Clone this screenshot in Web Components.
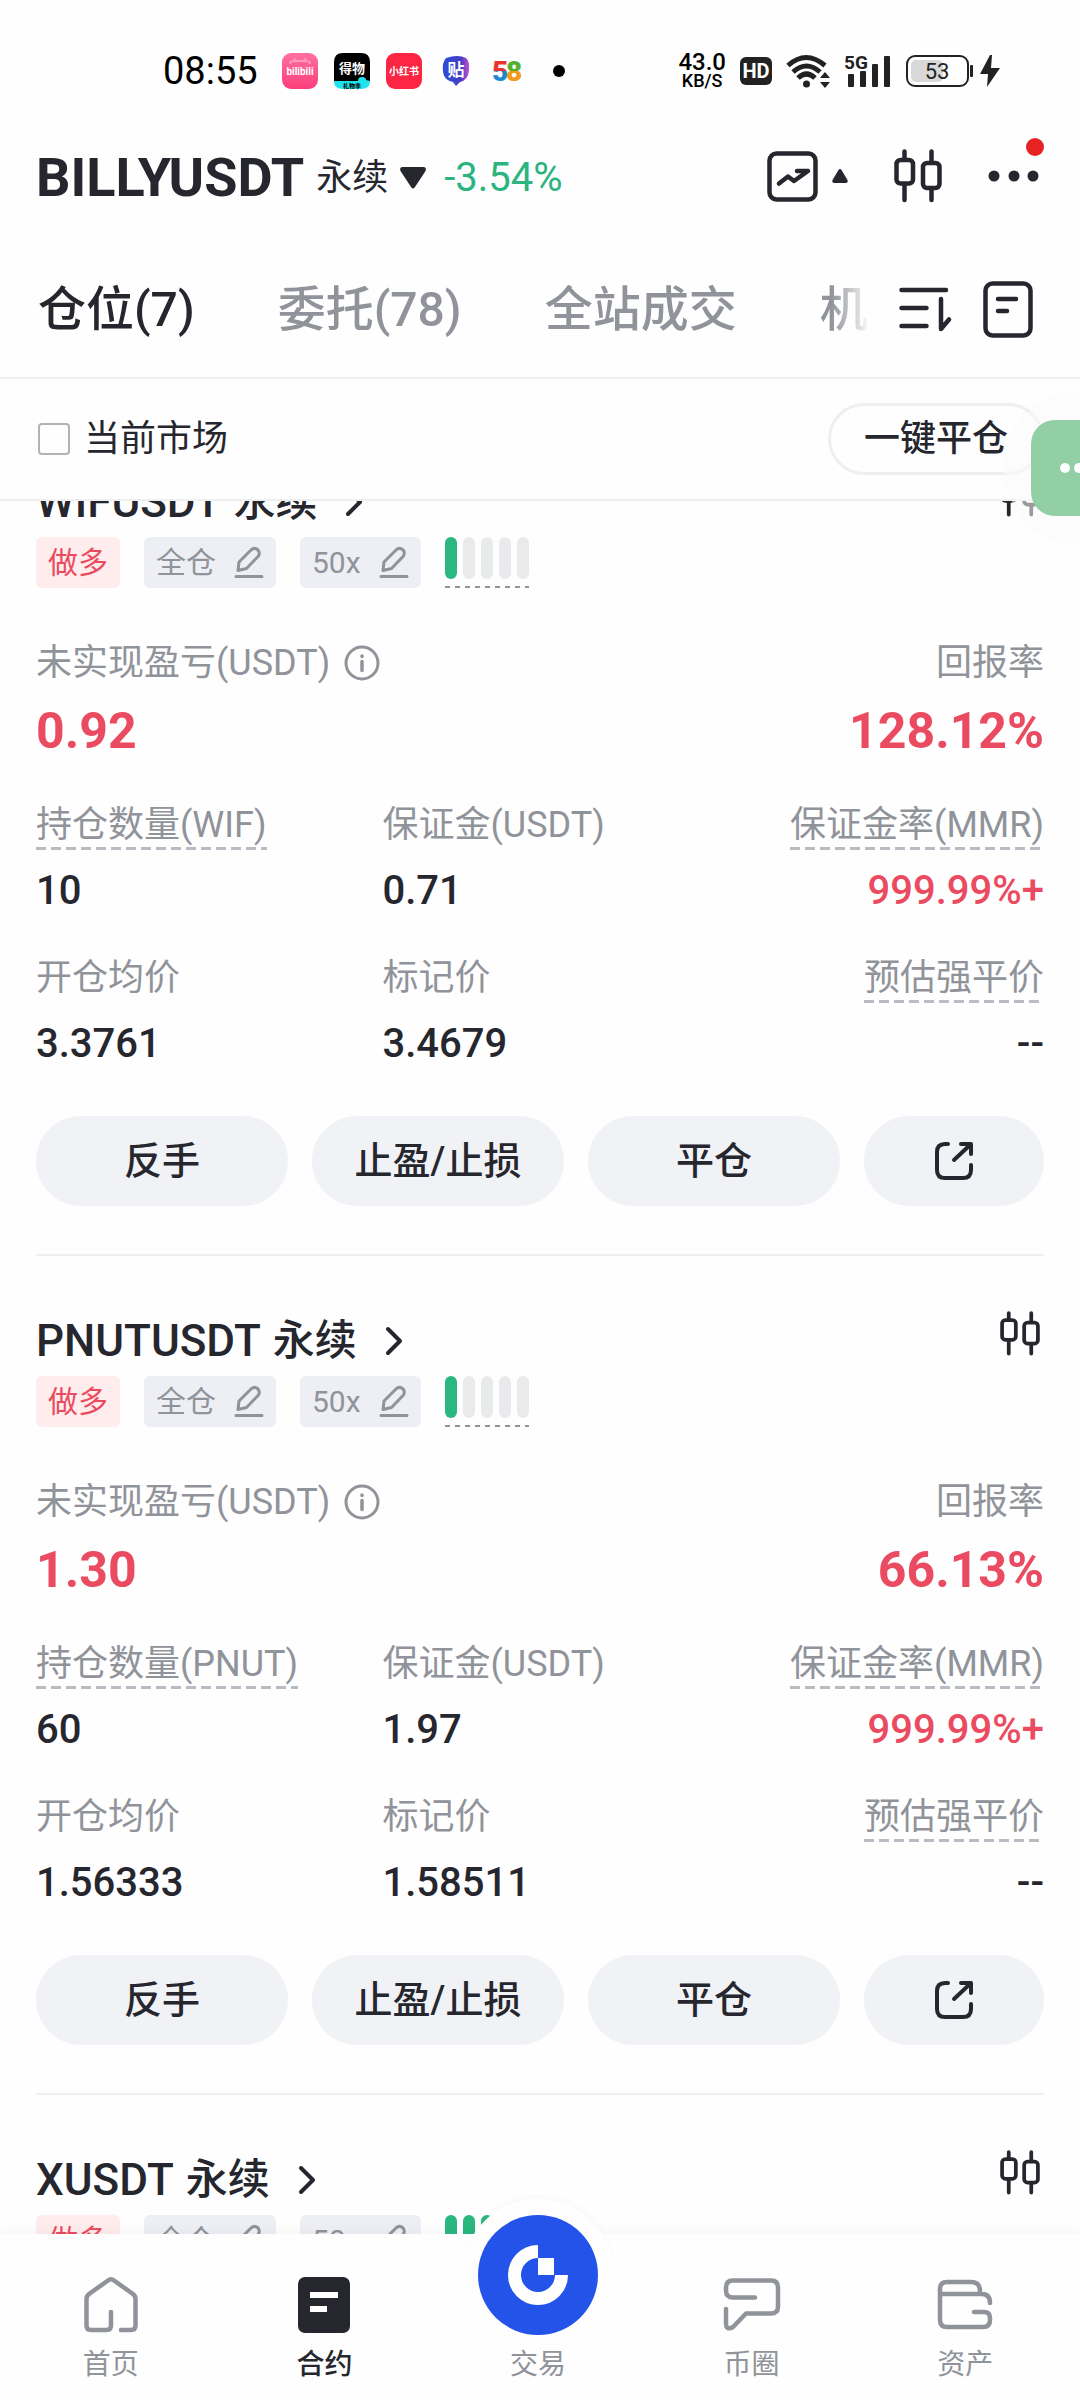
<!DOCTYPE html>
<html lang="zh-CN">
<head>
<meta charset="utf-8">
<meta name="viewport" content="width=device-width, initial-scale=1">
<title>合约持仓</title>
<style>
    :root {
        --ink: #26272e;
        --muted: #909399;
        --red: #ea4b60;
        --green: #2bb47f;
        --line: #efeff0;
        --pill: #f1f2f6;
    }

    body {
        margin: 0;
        background: #fefefe;
        color: var(--ink);
        font-family: Roboto, "Noto Sans CJK SC", sans-serif;
    }
</style>
</head>
<body>
<trade-app>
    <status-bar slot="top"></status-bar>
    <market-header slot="top" pair="BILLYUSDT" kind="永续" change="-3.54%"></market-header>
    <position-tabs slot="top"></position-tabs>
    <filter-row slot="top"></filter-row>

    <position-card pair="WIFUSDT" level="1">
        <metric-item big label="未实现盈亏(USDT)" value="0.92" info></metric-item>
        <metric-item big end label="回报率" value="128.12%"></metric-item>
        <metric-item slot="rows" dashed label="持仓数量(WIF)" value="10"></metric-item>
        <metric-item slot="rows" label="保证金(USDT)" value="0.71"></metric-item>
        <metric-item slot="rows" dashed end red label="保证金率(MMR)" value="999.99%+"></metric-item>
        <metric-item slot="rows" label="开仓均价" value="3.3761"></metric-item>
        <metric-item slot="rows" label="标记价" value="3.4679"></metric-item>
        <metric-item slot="rows" dashed end label="预估强平价" value="--"></metric-item>
        <position-actions slot="actions"></position-actions>
    </position-card>

    <position-card pair="PNUTUSDT" level="1">
        <metric-item big label="未实现盈亏(USDT)" value="1.30" info></metric-item>
        <metric-item big end label="回报率" value="66.13%"></metric-item>
        <metric-item slot="rows" dashed label="持仓数量(PNUT)" value="60"></metric-item>
        <metric-item slot="rows" label="保证金(USDT)" value="1.97"></metric-item>
        <metric-item slot="rows" dashed end red label="保证金率(MMR)" value="999.99%+"></metric-item>
        <metric-item slot="rows" label="开仓均价" value="1.56333"></metric-item>
        <metric-item slot="rows" label="标记价" value="1.58511"></metric-item>
        <metric-item slot="rows" dashed end label="预估强平价" value="--"></metric-item>
        <position-actions slot="actions"></position-actions>
    </position-card>

    <position-card pair="XUSDT" level="3"></position-card>

    <tab-bar slot="bottom">
        <tab-item icon="home">首页</tab-item>
        <tab-item icon="contract" active>合约</tab-item>
        <tab-item icon="logo">交易</tab-item>
        <tab-item icon="chat">币圈</tab-item>
        <tab-item icon="wallet">资产</tab-item>
    </tab-bar>
    <chat-bubble slot="bottom"></chat-bubble>
</trade-app>

<script>
const ICONS = {
    chart: [51, 51, `<g stroke-width="4.5"><rect x="2.5" y="2.5" width="46" height="46" rx="7"/><path d="M12 32.5l9-7 6 4.5 14-10H30"/></g>`],
    candles: [48, 54, `<g stroke-width="4.5"><rect x="2.5" y="11" width="16.5" height="23.5" rx="4"/><rect x="29" y="14" width="16.5" height="25" rx="4"/><path d="M10.5 2.5V10M10.5 36v15M37.5 2.5V13M37.5 40v11"/></g>`],
    down: [26, 22, `<path fill="currentColor" stroke="none" d="M3 0h20q4 0 2.5 4L15 20q-2 3-4 0L.5 4Q-1 0 3 0z"/>`],
    up: [16, 14, `<path fill="currentColor" stroke="none" d="M6.500 1q1.500-2 3 0l6 10q1 3-2 3h-11q-3 0-2-3z"/>`],
    more: [56, 54, `<g stroke="none" fill="currentColor"><circle cx="6" cy="27" r="5.5"/><circle cx="26" cy="27" r="5.5"/><circle cx="45" cy="27" r="5.5"/><circle cx="47" cy="-2" r="9" fill="#e62222"/></g>`],
    sort: [52, 46, `<path stroke-width="4.5" d="M2.500 3H47M2.500 21h25M2.500 39h25M42 12v30l8-9.500"/>`],
    doc: [50, 57, `<g stroke-width="4.5"><rect x="2.5" y="2.5" width="45" height="52" rx="7"/><path d="M15 18h18M15 30h9"/></g>`],
    chevron: [18, 30, `<path stroke-width="4" d="M3 3l12 12L3 27"/>`],
    edit: [30, 32, `<path stroke-width="3" d="M2 29.500h26M4 23.500l1-8.500L17 3q3.500-3 6.500-.5t1 6.500L12.500 21.500z"/>`],
    info: [36, 36, `<circle cx="18" cy="18" r="16" stroke-width="3"/><path stroke-width="3.5" d="M18 16.500v9M18 11v.5"/>`],
    share: [40, 40, `<path stroke-width="4" d="M14 3h-3q-8 0-8 8v18q0 8 8 8h18q8 0 8-8v-5M27 3h10v10M37 3L20 19"/>`],
    home: [56, 58, `<path stroke-width="4.5" d="M38 54h10q4.500 0 4.500-4.500V23q0-3-2.500-5L31 4.500q-3-2.500-6 0L6 18q-2.500 2-2.500 5v26.500q0 4.500 4.500 4.500h15.500q4.500 0 4.500-4.500V36"/>`],
    contract: [56, 58, `<rect x="2" y="1" width="52" height="56" rx="7" fill="currentColor" stroke="none"/><path stroke="#fff" stroke-width="6" stroke-linecap="butt" d="M14 19h28M14 33h17"/>`],
    chat: [58, 58, `<path stroke-width="4.5" d="M32 21.500H10q-7 0-7-7v-3q0-7 7-7h38q7 0 7 7v19q0 7-7 7H23L10 51q-7 4-7-4V33"/>`],
    wallet: [56, 58, `<path stroke-width="4.5" d="M43 18v-3q0-9-9-9H10q-7 0-7 7v31q0 7 7 7h36q7 0 7-7v-2q0-6-6-6H37M3 18h42q8 0 8 9"/>`],
    logo: [120, 120, `<circle cx="60" cy="60" r="60" fill="#2353e8" stroke="none"/><path d="M60 36.500A23.500 23.500 0 1 0 83.500 60" fill="none" stroke="#fff" stroke-width="13" stroke-linecap="butt"/><path d="M60 43h16v17H60z" fill="#fff" stroke="none"/>`],
    wifi: [44, 36, `<path stroke-width="5" stroke-linecap="butt" d="M2 12.500q18-16 37 0M7 19q13.500-12 27 0M12 25q8.500-8 17 0"/><g stroke="none" fill="currentColor"><circle cx="20.5" cy="31" r="3.5"/><path d="M39 19l5 6H34zM39 35l5-6H34z"/></g>`],
    bolt: [20, 32, `<path fill="currentColor" stroke="none" d="M10 0L0 19h8l-1 13 13-19h-9l1-13z"/>`]
};

class appIcon extends HTMLElement {
    constructor() {
        super();
        this.attachShadow({ mode: "open" });
    }

    connectedCallback() {
        const [w, h, shape] = ICONS[this.getAttribute('name')];
        const width = Number(this.getAttribute('width')) || w;
        this.shadowRoot.innerHTML = `
            <style>
                :host { display: block; flex: none; }
                svg { display: block; overflow: visible; }
            </style>
            <svg width="${width}" height="${Math.round(h * width / w)}" viewBox="0 0 ${w} ${h}" aria-hidden="true"
                fill="none" stroke="currentColor" stroke-linecap="round" stroke-linejoin="round">${shape}</svg>
        `;
    }
}

// Shared base: every element renders its template once, into an open root.
class BaseElement extends HTMLElement {
    constructor() {
        super();
        this.attachShadow({ mode: "open" });
    }

    connectedCallback() {
        const template = document.createElement('template');
        template.innerHTML = `
            <style>
                button { border: 0; padding: 0; margin: 0; background: none; color: inherit; font: inherit; }
                a { color: inherit; text-decoration: none; }
            </style>
            ${this.getStyles()}
            ${this.getTemplate()}
        `;
        this.shadowRoot.replaceChildren(template.content.cloneNode(true));
    }

    attr(name) {
        return this.getAttribute(name);
    }
}

class tradeApp extends BaseElement {
    getStyles() {
        return `<style>
            :host { display: flex; flex-direction: column; height: 100vh; position: relative; overflow: hidden; }
            main { flex: 1; min-height: 0; overflow-y: auto; scrollbar-width: none; }
        </style>`;
    }

    getTemplate() {
        return `
            <slot name="top"></slot>
            <main><slot></slot></main>
            <slot name="bottom"></slot>
        `;
    }
}

class statusBar extends BaseElement {
    getStyles() {
        return `<style>
            :host { display: flex; align-items: center; justify-content: space-between; height: 102px; padding: 20px 80px 0 163px; color: #000; }
            .group { display: flex; align-items: center; }
            .left { gap: 16px; }
            .right { gap: 14px; color: #222; }
            time { font-size: 38px; line-height: 40px; margin-right: 8px; }
            svg { display: block; flex: none; overflow: visible; }
            .rate { display: grid; justify-items: center; color: #000; font-weight: 500; }
            .rate b { font-size: 24px; line-height: 20px; font-weight: 500; }
            .rate span { font-size: 18px; line-height: 18px; }
            .hd { background: #222; color: #fff; border-radius: 6px; width: 32px; font-weight: 700; font-size: 20px; line-height: 28px; text-align: center; }
            .cell { gap: 6px; }
        </style>`;
    }

    getTemplate() {
        return `
            <div class="group left">
                <time>08:55</time>
                <svg width="36" height="36" font-weight="700" text-anchor="middle">
                    <defs><linearGradient id="bili" x2="0" y2="1"><stop offset="0" stop-color="#ff6fa0"/><stop offset="1" stop-color="#fb3f7c"/></linearGradient></defs>
                    <rect width="36" height="36" rx="9" fill="url(#bili)"/>
                    <path d="M12 5l3 4M24 5l-3 4M8 11q0-3 4-3h12q4 0 4 3" fill="none" stroke="#ff97ba" stroke-width="2"/>
                    <text x="18" y="22" font-size="10" fill="#fff">bilibili</text>
                </svg>
                <svg width="36" height="36" font-weight="700" text-anchor="middle">
                    <path d="M9 0h18q9 0 9 9v19H0V9q0-9 9-9z" fill="#000"/>
                    <path d="M0 28h24q0-4 4-4t4 3l4 1q0 8-9 8H9q-9 0-9-8z" fill="#1fe2ea"/>
                    <text x="18" y="20" font-size="13" fill="#fff">得物</text>
                    <text x="18" y="35" font-size="6" fill="#000">礼物季</text>
                </svg>
                <svg width="36" height="36" font-weight="700" text-anchor="middle">
                    <rect width="36" height="36" rx="9" fill="#fc2644"/>
                    <text x="18" y="22" font-size="10" fill="#fff">小红书</text>
                </svg>
                <svg width="36" height="36" font-weight="700" text-anchor="middle">
                    <defs><linearGradient id="tie" x2="1" y2="0"><stop offset="0" stop-color="#2b4fd8"/><stop offset=".7" stop-color="#4a3bc4"/><stop offset="1" stop-color="#c653d6"/></linearGradient></defs>
                    <path d="M8 5q12-4 20 0 4 3 3 13-1 9-9 11l-4 4-3-4q-9-2-10-10Q4 9 8 5z" fill="url(#tie)"/>
                    <text x="18" y="23" font-size="17" fill="#fff">贴</text>
                </svg>
                <svg width="36" height="36" font-size="28" font-weight="900">
                    <defs>
                        <linearGradient id="five" x2="0" y2="1"><stop offset=".5" stop-color="#e8332e"/><stop offset=".5" stop-color="#1d87cf"/></linearGradient>
                        <linearGradient id="eight" x2="0" y2="1"><stop offset=".5" stop-color="#55b02c"/><stop offset=".5" stop-color="#f39a1e"/></linearGradient>
                    </defs>
                    <text x="2" y="28" fill="url(#five)">5</text><text x="16" y="28" fill="url(#eight)">8</text>
                </svg>
                <svg width="36" height="36"><circle cx="17" cy="18" r="6"/></svg>
            </div>
            <div class="group right">
                <div class="rate"><b>43.0</b><span>KB/S</span></div>
                <span class="hd">HD</span>
                <app-icon name="wifi"></app-icon>
                <svg width="48" height="34" fill="#222">
                    <text x="0" y="15" font-size="19" font-weight="700">5G</text>
                    <rect x="4" y="20" width="6" height="13" rx="1"/><rect x="16" y="17" width="6" height="16" rx="1"/>
                    <rect x="28" y="10" width="6" height="23" rx="1"/><rect x="40" y="2" width="6" height="31" rx="1"/>
                </svg>
                <div class="group cell">
                    <svg width="68" height="32">
                        <rect x="5" y="5" width="32" height="22" rx="5" fill="#d8d8d8"/>
                        <rect x="1" y="1" width="61" height="30" rx="8" fill="none" stroke="#222" stroke-width="2"/>
                        <rect x="64" y="10" width="3" height="12" rx="1" fill="#222"/>
                        <text x="31" y="24" font-size="22" text-anchor="middle" fill="#222">53</text>
                    </svg>
                    <app-icon name="bolt"></app-icon>
                </div>
            </div>
        `;
    }
}

class marketHeader extends BaseElement {
    getStyles() {
        return `<style>
            :host { display: flex; align-items: center; justify-content: space-between; height: 110px; padding: 0 36px; }
            .pair, .tools { display: flex; align-items: center; }
            .pair { gap: 12px; padding-top: 2px; }
            h1 { margin: 0; font-size: 54px; line-height: 60px; font-weight: 700; }
            .kind { font-size: 36px; line-height: 50px; }
            .change { font-size: 40px; line-height: 50px; color: var(--green); margin-left: 6px; }
            .tools { gap: 46px; padding-bottom: 2px; }
            .view { display: flex; align-items: center; gap: 14px; }
        </style>`;
    }

    getTemplate() {
        return `
            <div class="pair">
                <h1>${this.attr('pair')}</h1>
                <span class="kind">${this.attr('kind')}</span>
                <app-icon name="down"></app-icon>
                <span class="change">${this.attr('change')}</span>
            </div>
            <div class="tools">
                <button class="view" aria-label="图表"><app-icon name="chart"></app-icon><app-icon name="up"></app-icon></button>
                <button aria-label="K线"><app-icon name="candles"></app-icon></button>
                <button aria-label="更多"><app-icon name="more"></app-icon></button>
            </div>
        `;
    }
}

class positionTabs extends BaseElement {
    getStyles() {
        return `<style>
            :host { display: flex; align-items: center; gap: 28px; height: 135px; padding: 10px 47px 0 38px; border-bottom: 2px solid var(--line); }
            nav { flex: 1; min-width: 0; display: flex; gap: 83px; overflow: hidden; white-space: nowrap;
                -webkit-mask-image: linear-gradient(to left, transparent, #000 40px); mask-image: linear-gradient(to left, transparent, #000 40px); }
            nav button { flex: none; font-size: 48px; line-height: 64px; font-weight: 500; color: var(--muted); }
            nav button[aria-current] { color: var(--ink); }
            .tools { display: flex; align-items: center; gap: 32px; }
        </style>`;
    }

    getTemplate() {
        return `
            <nav>
                <button aria-current="true">仓位(7)</button>
                <button>委托(78)</button>
                <button>全站成交</button>
                <button>机</button>
            </nav>
            <div class="tools">
                <button aria-label="排序"><app-icon name="sort"></app-icon></button>
                <button aria-label="记录"><app-icon name="doc"></app-icon></button>
            </div>
        `;
    }
}

class filterRow extends BaseElement {
    getStyles() {
        return `<style>
            :host { display: flex; align-items: center; justify-content: space-between; height: 120px; padding: 0 36px 0 38px; border-bottom: 2px solid var(--line); font-size: 36px; line-height: 50px; }
            label { display: flex; align-items: center; gap: 14px; }
            input { appearance: none; width: 32px; height: 32px; margin: 0; border: 2px solid #b2b3b5; border-radius: 4px; }
            button { height: 72px; padding: 0 33px; border: 3px solid var(--line); border-radius: 36px; font-weight: 500; }
        </style>`;
    }

    getTemplate() {
        return `
            <label><input type="checkbox">当前市场</label>
            <button>一键平仓</button>
        `;
    }
}

class positionCard extends BaseElement {
    getStyles() {
        return `<style>
            :host { display: block; margin: 0 36px; padding: 55px 0 48px; border-bottom: 2px solid var(--line); }
            :host(:last-of-type) { border-bottom: 0; }
            header { display: flex; justify-content: space-between; align-items: flex-start; height: 65px; }
            header a { display: flex; align-items: center; gap: 12px; font-size: 42px; line-height: 60px; font-weight: 500; }
            header a b { font-size: 44px; font-weight: 500; }
            header a app-icon { margin-left: 16px; }
            header button { margin-right: 4px; }
            .tags { display: flex; align-items: flex-start; gap: 24px; height: 51px; font-size: 30px; line-height: 51px; }
            .tag { display: flex; align-items: center; gap: 18px; height: 51px; padding: 0 12px; border-radius: 6px; background: #eeeff4; color: var(--muted); }
            .long { background: #ffecec; color: var(--red); }
            .level { display: flex; gap: 6px; height: 42px; padding-bottom: 9px;
                background: repeating-linear-gradient(to right, #909399 0 5px, transparent 5px 10px) left bottom / 100% 2px no-repeat; }
            .level i { width: 12px; border-radius: 6px; background: #e9eaec; }
            .level .on { background: #2ab780; }
            .top { display: flex; justify-content: space-between; margin-top: 50px; }
            .rows { display: grid; grid-template-columns: 11fr 11fr 10fr; row-gap: 37px; margin: 39px 0 47px; }
        </style>`;
    }

    getTemplate() {
        const level = Number(this.attr('level'));
        const bars = [1, 2, 3, 4, 5].map(n => `<i class="${n <= level ? 'on' : ''}"></i>`).join('');
        const body = this.children.length ? `
            <div class="top"><slot></slot></div>
            <div class="rows"><slot name="rows"></slot></div>
            <slot name="actions"></slot>
        ` : '';

        return `
            <header>
                <a href="#${this.attr('pair')}"><b>${this.attr('pair')}</b> <span>永续</span> <app-icon name="chevron"></app-icon></a>
                <button aria-label="K线"><app-icon name="candles" width="40"></app-icon></button>
            </header>
            <div class="tags">
                <span class="tag long">做多</span>
                <button class="tag">全仓<app-icon name="edit"></app-icon></button>
                <button class="tag">50x<app-icon name="edit"></app-icon></button>
                <div class="level">${bars}</div>
            </div>
            ${body}
        `;
    }
}

class metricItem extends BaseElement {
    getStyles() {
        return `<style>
            :host { display: flex; flex-direction: column; align-items: flex-start; gap: 16px; }
            :host([big]) { gap: 13px; }
            :host([end]) { align-items: flex-end; }
            .label { display: flex; align-items: center; gap: 14px; font-size: 36px; line-height: 50px; color: var(--muted); white-space: nowrap; }
            :host([dashed]) .label { background: repeating-linear-gradient(to right, #babcc3 0 10px, transparent 10px 15px) left bottom / 100% 3px no-repeat; }
            .value { font-size: 40px; line-height: 50px; font-weight: 500; }
            :host([red]) .value { color: var(--red); }
            :host([big]) .value { font-size: 50px; line-height: 60px; font-weight: 700; color: var(--red); }
        </style>`;
    }

    getTemplate() {
        const info = this.hasAttribute('info') ? '<app-icon name="info"></app-icon>' : '';
        return `
            <span class="label">${this.attr('label')}${info}</span>
            <span class="value">${this.attr('value')}</span>
        `;
    }
}

class positionActions extends BaseElement {
    getStyles() {
        return `<style>
            :host { display: grid; grid-template-columns: 7fr 7fr 7fr 5fr; gap: 24px; }
            button { display: grid; place-items: center; height: 90px; border-radius: 45px; background: var(--pill); font-size: 38px; line-height: 50px; font-weight: 500; }
        </style>`;
    }

    getTemplate() {
        return `
            <button>反手</button>
            <button>止盈/止损</button>
            <button>平仓</button>
            <button aria-label="分享"><app-icon name="share"></app-icon></button>
        `;
    }
}

class tabBar extends BaseElement {
    getStyles() {
        return `<style>
            :host { display: block; position: relative; box-shadow: 0 -2px 12px rgba(0, 0, 0, .04); background: #fefefe; }
            nav { display: grid; grid-template-columns: repeat(5, 1fr); height: 166px; padding: 0 8px 0 4px; }
        </style>`;
    }

    getTemplate() {
        return `<nav><slot></slot></nav>`;
    }
}

class tabItem extends BaseElement {
    getStyles() {
        return `<style>
            :host { display: block; color: var(--muted); }
            :host([active]) { color: var(--ink); }
            a { display: flex; flex-direction: column; align-items: center; justify-content: flex-end; gap: 12px; height: 150px; font-size: 28px; line-height: 38px; }
            :host([active]) a { font-weight: 500; }
            /* The trade button rises above the bar on a round white base. */
            .raised { border: 16px solid #fefefe; border-radius: 50%; margin: -16px 0 -17px; box-shadow: 0 -4px 10px -4px rgba(0, 0, 0, .05); }
        </style>`;
    }

    getTemplate() {
        const icon = this.attr('icon');
        return `
            <a href="#${icon}">
                <app-icon name="${icon}" class="${icon === 'logo' ? 'raised' : ''}"></app-icon>
                <slot></slot>
            </a>
        `;
    }
}

class chatBubble extends BaseElement {
    getStyles() {
        return `<style>
            :host { position: absolute; top: 392px; right: 0; width: 76px; height: 152px; display: flex; align-items: center; justify-content: flex-end;
                border-radius: 76px 0 0 76px; background: rgba(250, 250, 250, .55); box-shadow: 0 0 6px rgba(0, 0, 0, .02); }
            button { display: flex; align-items: center; justify-content: flex-end; gap: 4px; width: 49px; height: 96px; border-radius: 24px 0 0 24px; background: #93cfa4; overflow: hidden; }
            i { flex: none; width: 10px; height: 10px; border-radius: 50%; background: #fff; }
            i:last-child { margin-right: -4px; }
        </style>`;
    }

    getTemplate() {
        return `<button aria-label="悬浮窗"><i></i><i></i></button>`;
    }
}

customElements.define('app-icon', appIcon);
customElements.define('metric-item', metricItem);
customElements.define('position-actions', positionActions);
customElements.define('position-card', positionCard);
customElements.define('status-bar', statusBar);
customElements.define('market-header', marketHeader);
customElements.define('position-tabs', positionTabs);
customElements.define('filter-row', filterRow);
customElements.define('tab-item', tabItem);
customElements.define('tab-bar', tabBar);
customElements.define('chat-bubble', chatBubble);
customElements.define('trade-app', tradeApp);

// Open the list part-way down the first position.
document.querySelector('trade-app').shadowRoot.querySelector('main').scrollTop = 84;
</script>
</body>
</html>
